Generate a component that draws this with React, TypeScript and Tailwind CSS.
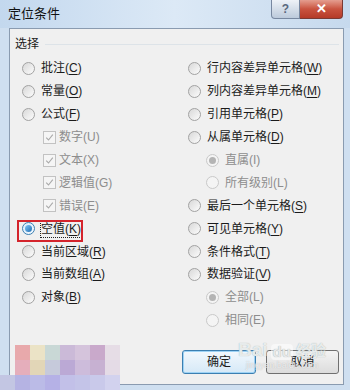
import React from 'react'

type Item = {
  label: string
  key: string
  kind: 'radio' | 'check'
  indent?: boolean
  disabled?: boolean
  checked?: boolean
  underline?: boolean
  focus?: boolean
}

const leftItems: Item[] = [
  { label: '批注', key: 'C', kind: 'radio', underline: true },
  { label: '常量', key: 'O', kind: 'radio', underline: true },
  { label: '公式', key: 'F', kind: 'radio', underline: true },
  { label: '数字', key: 'U', kind: 'check', indent: true, disabled: true, checked: true },
  { label: '文本', key: 'X', kind: 'check', indent: true, disabled: true, checked: true },
  { label: '逻辑值', key: 'G', kind: 'check', indent: true, disabled: true, checked: true },
  { label: '错误', key: 'E', kind: 'check', indent: true, disabled: true, checked: true },
  { label: '空值', key: 'K', kind: 'radio', underline: true, checked: true, focus: true },
  { label: '当前区域', key: 'R', kind: 'radio', underline: true },
  { label: '当前数组', key: 'A', kind: 'radio', underline: true },
  { label: '对象', key: 'B', kind: 'radio', underline: true },
]

const rightItems: Item[] = [
  { label: '行内容差异单元格', key: 'W', kind: 'radio', underline: true },
  { label: '列内容差异单元格', key: 'M', kind: 'radio', underline: true },
  { label: '引用单元格', key: 'P', kind: 'radio', underline: true },
  { label: '从属单元格', key: 'D', kind: 'radio', underline: true },
  { label: '直属', key: 'I', kind: 'radio', indent: true, disabled: true, checked: true },
  { label: '所有级别', key: 'L', kind: 'radio', indent: true, disabled: true },
  { label: '最后一个单元格', key: 'S', kind: 'radio', underline: true },
  { label: '可见单元格', key: 'Y', kind: 'radio', underline: true },
  { label: '条件格式', key: 'T', kind: 'radio', underline: true },
  { label: '数据验证', key: 'V', kind: 'radio', underline: true },
  { label: '全部', key: 'L', kind: 'radio', indent: true, disabled: true, checked: true },
  { label: '相同', key: 'E', kind: 'radio', indent: true, disabled: true },
]

// pixelated blur left by the screenshot
const mosaic = [
  ['#e8a9ab', '#ebe3c6', '#c9d8d6', '#cbbad8', '#d5c4dc', '#c9a9cb', '#e6dde6'],
  ['#e5aebb', '#e2d6b7', '#c6cadb', '#bba9d5', '#cdbcdb', '#c7b1d2', '#e4dbe6'],
]
const mosaicBottom = ['#c3c6e3', '#b5b3e3', '#bbbbe7', '#b5b1e6', '#c2c0e8', '#c4c4e8', '#c9c9ea', '#d2d2ee']

function Radio({ checked, disabled }: { checked?: boolean; disabled?: boolean }) {
  const ring = disabled
    ? 'border-[#c9c9c9] bg-[#f4f4f4]'
    : checked
      ? 'border-[#3c7fb1] bg-gradient-to-br from-[#d9ecfb] to-[#f4f9fe]'
      : 'border-[#a2a2a2] bg-gradient-to-br from-[#d8d8d8] to-[#fcfcfc]'
  return (
    <span className={`flex h-[13px] w-[13px] shrink-0 items-center justify-center rounded-full border ${ring}`}>
      {checked && (
        <span
          className={`h-[7px] w-[7px] rounded-full ${
            disabled ? 'bg-[#b4b4b4]' : 'bg-gradient-to-br from-[#7cc4f6] to-[#1d6fb3]'
          }`}
        />
      )}
    </span>
  )
}

function Check() {
  return (
    <span className="flex h-[13px] w-[13px] shrink-0 items-center justify-center border border-[#c2c2c2] bg-[#f5f5f5]">
      <svg width="9" height="9" viewBox="0 0 9 9">
        <path d="M1.2 4.6 L3.5 7 L7.8 1.6" fill="none" stroke="#aaaaaa" strokeWidth="1.1" />
      </svg>
    </span>
  )
}

function Row({ item, subIndent }: { item: Item; subIndent: string }) {
  const text = item.disabled ? 'text-[#8d8d8d]' : 'text-[#1b1b1b]'
  const label = (
    <span className={`whitespace-nowrap ${text}`}>
      {item.label}(
      {item.underline ? <span className="underline underline-offset-2">{item.key}</span> : item.key})
    </span>
  )
  return (
    <div className={`flex h-[22.9px] items-center ${item.indent ? subIndent : ''}`}>
      {item.kind === 'check' ? <Check /> : <Radio checked={item.checked} disabled={item.disabled} />}
      {item.focus ? (
        <span className="ml-[5px] border border-dotted border-[#222] leading-[16px]">{label}</span>
      ) : (
        <span className={item.kind === 'check' ? 'ml-[3px]' : 'ml-[6px]'}>{label}</span>
      )}
    </div>
  )
}

export default function App() {
  return (
    <div
      className="relative h-[390px] w-[350px] overflow-hidden bg-[#cfdff0] text-[12px]"
      style={{ fontFamily: '"Liberation Sans", "Noto Sans CJK SC", sans-serif' }}
    >
      {/* title bar */}
      <div className="flex h-[28px] items-start bg-gradient-to-r from-[#c3d8ee] via-[#dce9f6] to-[#c6d9ed]">
        <div className="pl-[8px] pt-[5px] text-[13px] leading-[18px] text-[#111]">定位条件</div>
        <div className="ml-auto mr-[7px] flex">
          <div className="flex h-[19px] w-[29px] items-center justify-center rounded-bl-[4px] border border-t-0 border-[#7888a0] bg-gradient-to-b from-[#eef2f7] to-[#bccadb] text-[12px] font-bold text-[#5a697e]">
            ?
          </div>
          <div className="flex h-[19px] w-[43px] items-center justify-center rounded-br-[4px] border border-l-0 border-t-0 border-[#7a3a34] bg-gradient-to-b from-[#e49d8f] via-[#c9533f] to-[#b53a28] text-[13px] font-bold text-white">
            ✕
          </div>
        </div>
      </div>

      {/* client area */}
      <div className="ml-[9px] mr-[6px] flex h-[357px] flex-col border border-[#8a9bb0] bg-[#f0f0f0]">
        <div className="flex items-center pl-[5px] pr-[4px] pt-[6px]">
          <span className="leading-[18px] text-[#1b1b1b]">选择</span>
          <span className="ml-[6px] h-px flex-1 bg-[#dde3e8]" />
        </div>

        <div className="mt-[4px] grid grid-cols-[166px_1fr] pl-[12px]">
          <div className="flex flex-col">
            {leftItems.map((it, i) => (
              <Row key={i} item={it} subIndent="pl-[21px]" />
            ))}
          </div>
          <div className="flex flex-col">
            {rightItems.map((it, i) => (
              <Row key={i} item={it} subIndent="pl-[18px]" />
            ))}
          </div>
        </div>

        <div className="mt-auto mb-[10px] mr-[4px] flex justify-end gap-[10px]">
          <button className="h-[24px] w-[74px] rounded-[3px] border border-[#3c7fb1] bg-gradient-to-b from-[#f2f8fd] to-[#d6e9f7] text-[#1b1b1b] shadow-[inset_0_0_0_1px_#9ed3f5]">
            确定
          </button>
          <button className="h-[24px] w-[73px] rounded-[3px] border border-[#707070] bg-gradient-to-b from-[#f4f4f4] to-[#dcdcdc] text-[#1b1b1b]">
            取消
          </button>
        </div>
      </div>

      {/* red highlight around 空值 */}
      <div className="absolute left-[17px] top-[220px] h-[22px] w-[66px] border-2 border-[#d4242c]" />

      <div className="absolute left-[15px] top-[345px] flex flex-col">
        {mosaic.map((row, r) => (
          <div key={r} className="flex">
            {row.map((c, i) => (
              <div key={i} className="h-[15px] w-[15px]" style={{ backgroundColor: c }} />
            ))}
          </div>
        ))}
      </div>
      <div className="absolute left-0 top-[375px] flex">
        {mosaicBottom.map((c, i) => (
          <div key={i} className="h-[15px] w-[15px]" style={{ backgroundColor: c }} />
        ))}
      </div>

      {/* baidu watermark */}
      <div className="pointer-events-none absolute left-[238px] top-[340px] flex flex-col items-center text-white/75">
        <div className="flex items-end gap-[3px] [text-shadow:0_0_1px_#9aa]">
          <span className="text-[19px] font-bold leading-[20px]">Bai</span>
          <span className="rounded-[4px] bg-white/50 px-[2px] text-[15px] font-bold leading-[16px] text-[#e8e8e8]">du</span>
          <span className="text-[15px] font-bold leading-[18px]">经验</span>
        </div>
        <span className="text-[9px] leading-[10px] [text-shadow:0_0_1px_#aaa]">jingyan.baidu.com</span>
      </div>
    </div>
  )
}
